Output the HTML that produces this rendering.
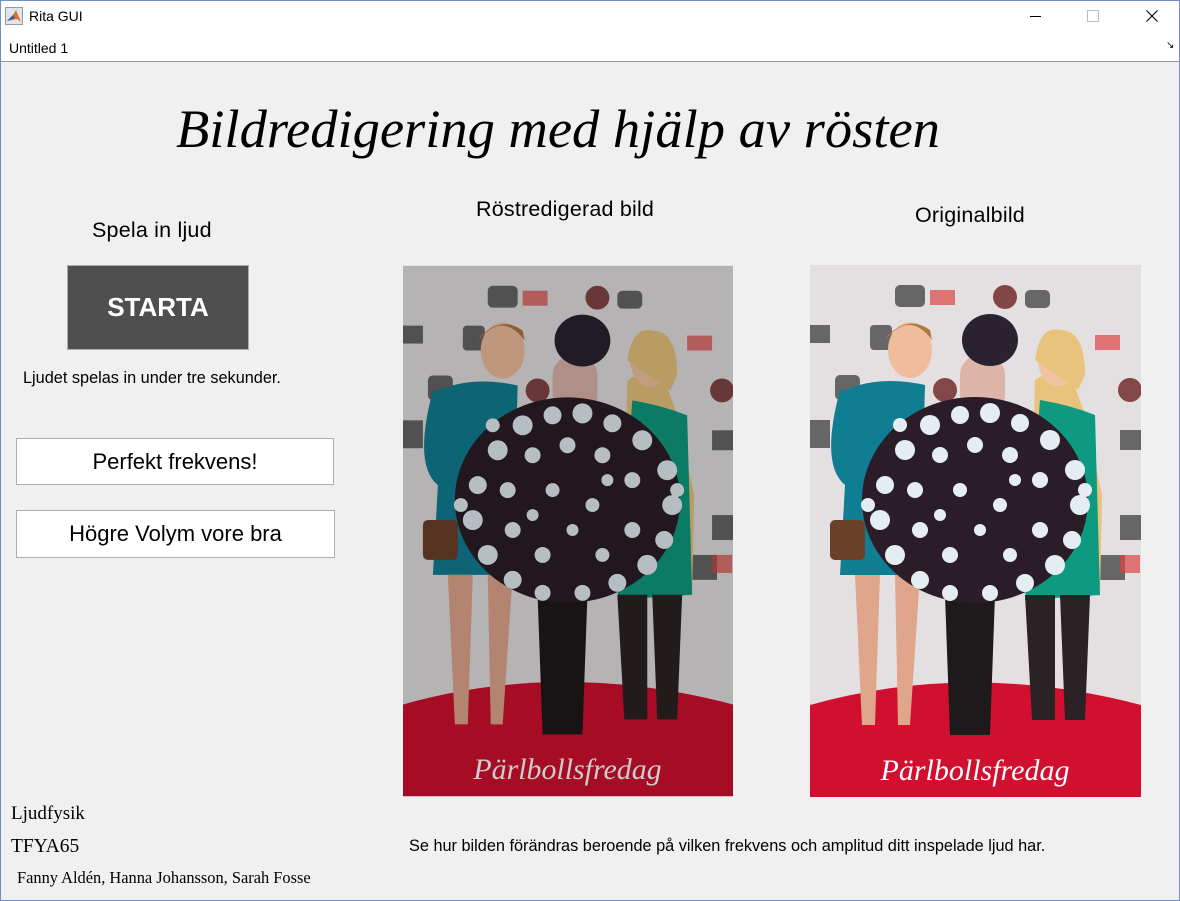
<!DOCTYPE html>
<html><head><meta charset="utf-8"><style>
body{margin:0;width:1180px;height:901px;background:#f0f0f0;position:relative;overflow:hidden;font-family:"Liberation Sans",sans-serif}
.a{position:absolute;white-space:nowrap}
.btn{position:absolute;background:#fff;border:1px solid #adadad;font-size:22px;text-align:center;box-sizing:border-box}
</style></head><body>
<div class="a" style="left:0;top:0;width:1180px;height:62px;background:#fff;border-bottom:1px solid #9a9a9a;box-sizing:border-box"></div>
<div class="a" style="left:0;top:0;width:1180px;height:901px;border:1px solid #6d8cc8;box-sizing:border-box;z-index:5;pointer-events:none"></div>
<svg class="a" style="left:5px;top:7px" width="18" height="18" viewBox="0 0 18 18"><rect x="0.5" y="0.5" width="17" height="17" fill="#dde6f0" stroke="#999"/><path d="M2 14 L8 8 L11 3 L16 15 L12 12 Z" fill="#e07020"/><path d="M2 14 L8 8 L10 11 Z" fill="#2a5fa8"/></svg>
<div class="a" style="left:29px;top:8px;font-size:14px;color:#000">Rita GUI</div>
<div class="a" style="left:1030px;top:16px;width:11px;height:1px;background:#000"></div>
<div class="a" style="left:1087px;top:10px;width:10px;height:10px;border:1px solid #bbb"></div>
<svg class="a" style="left:1146px;top:10px" width="12" height="12"><path d="M0.5 0.5L11.5 11.5M11.5 0.5L0.5 11.5" stroke="#000" stroke-width="1.1"/></svg>
<div class="a" style="left:9px;top:40px;font-size:14px">Untitled 1</div>
<div class="a" style="left:1166px;top:40px;font-size:10px">↘</div>

<div class="a" style="left:176px;top:97px;font-family:'Liberation Serif',serif;font-style:italic;font-size:54.5px;color:#000">Bildredigering med hjälp av rösten</div>
<div class="a" style="left:92px;top:218px;font-size:21.5px;letter-spacing:0.2px">Spela in ljud</div>
<div class="a" style="left:476px;top:197px;font-size:21.5px;letter-spacing:0.2px">Röstredigerad bild</div>
<div class="a" style="left:915px;top:203px;font-size:21.5px;letter-spacing:0.2px">Originalbild</div>
<div class="a" style="left:67px;top:265px;width:182px;height:85px;background:#4f4f4f;border:1px solid #adadad;box-sizing:border-box;color:#fff;font-weight:bold;font-size:26px;text-align:center;line-height:83px">STARTA</div>
<div class="a" style="left:23px;top:369px;font-size:16.3px">Ljudet spelas in under tre sekunder.</div>
<div class="btn" style="left:16px;top:438px;width:318px;height:47px;line-height:45px">Perfekt frekvens!</div>
<div class="btn" style="left:16px;top:510px;width:319px;height:48px;line-height:46px">Högre Volym vore bra</div>
<div class="a" style="left:11px;top:803px;font-family:'Liberation Serif',serif;font-size:19px">Ljudfysik</div>
<div class="a" style="left:11px;top:836px;font-family:'Liberation Serif',serif;font-size:19.5px">TFYA65</div>
<div class="a" style="left:17px;top:868px;font-family:'Liberation Serif',serif;font-size:16.4px">Fanny Aldén, Hanna Johansson, Sarah Fosse</div>
<div class="a" style="left:409px;top:837px;font-size:16.3px">Se hur bilden förändras beroende på vilken frekvens och amplitud ditt inspelade ljud har.</div>

<svg width="0" height="0" style="position:absolute"><defs>
<g id="ph">
<rect width="331" height="532" fill="#e4e0e1"/>
<g fill="#333" opacity=".7"><rect x="85" y="20" width="30" height="22" rx="5"/><rect x="215" y="25" width="25" height="18" rx="5"/><rect x="0" y="60" width="20" height="18"/><rect x="60" y="60" width="22" height="25" rx="4"/><rect x="25" y="110" width="25" height="25" rx="5"/><rect x="0" y="155" width="20" height="28"/><rect x="310" y="165" width="21" height="20"/><rect x="310" y="250" width="21" height="25"/><rect x="290" y="290" width="25" height="25"/></g>
<g fill="#d44" opacity=".7"><rect x="120" y="25" width="25" height="15"/><rect x="285" y="70" width="25" height="15"/><rect x="310" y="290" width="20" height="18"/></g>
<g fill="#6a2020" opacity=".8"><circle cx="195" cy="32" r="12"/><circle cx="135" cy="125" r="12"/><circle cx="320" cy="125" r="12"/></g>
<path d="M0 440 Q160 395 331 440 L331 532 L0 532Z" fill="#d0102e"/>
<rect x="150" y="90" width="45" height="60" rx="20" fill="#d9a99a" opacity=".8"/>
<path d="M35 125 Q70 110 115 120 L110 310 L30 310 L35 220 Q10 200 30 125Z" fill="#0f7d92"/>
<path d="M45 310 L70 310 L65 460 L52 460Z M85 310 L110 310 L100 460 L88 460Z" fill="#e0a68c"/>
<ellipse cx="100" cy="85" rx="22" ry="28" fill="#efbd9c"/><path d="M75 75 Q100 45 122 75 L120 65 Q100 50 78 70Z" fill="#b07840"/>
<rect x="20" y="255" width="35" height="40" rx="5" fill="#6a4028"/>
<path d="M225 115 Q255 95 268 130 L275 150 L292 230 L290 330 L220 330 Z" fill="#e8c37c"/>
<path d="M230 135 Q260 140 285 150 L290 330 L215 335Z" fill="#0e9a80"/>
<ellipse cx="248" cy="95" rx="20" ry="26" fill="#f2c3a2"/><path d="M225 95 Q230 60 250 65 Q275 65 275 110 L268 125 Z" fill="#e8c37c"/>
<path d="M215 330 L245 330 L245 455 L222 455Z M250 330 L280 330 L275 455 L255 455Z" fill="#2a2224"/>
<path d="M135 330 L185 330 L180 470 L140 470Z" fill="#1e1a1c"/>
<ellipse cx="180" cy="75" rx="28" ry="26" fill="#2a2230"/>
<ellipse cx="165" cy="235" rx="113" ry="103" fill="#2b1d27"/>
<g fill="#e4eef2">
<circle cx="120" cy="160" r="10"/><circle cx="150" cy="150" r="9"/><circle cx="180" cy="148" r="10"/><circle cx="210" cy="158" r="9"/><circle cx="240" cy="175" r="10"/><circle cx="95" cy="185" r="10"/><circle cx="265" cy="205" r="10"/><circle cx="75" cy="220" r="9"/><circle cx="270" cy="240" r="10"/><circle cx="70" cy="255" r="10"/><circle cx="262" cy="275" r="9"/><circle cx="85" cy="290" r="10"/><circle cx="245" cy="300" r="10"/><circle cx="110" cy="315" r="9"/><circle cx="215" cy="318" r="9"/><circle cx="140" cy="328" r="8"/><circle cx="180" cy="328" r="8"/><circle cx="130" cy="190" r="8"/><circle cx="165" cy="180" r="8"/><circle cx="200" cy="190" r="8"/><circle cx="230" cy="215" r="8"/><circle cx="105" cy="225" r="8"/><circle cx="110" cy="265" r="8"/><circle cx="230" cy="265" r="8"/><circle cx="140" cy="290" r="8"/><circle cx="200" cy="290" r="7"/><circle cx="150" cy="225" r="7"/><circle cx="190" cy="240" r="7"/><circle cx="170" cy="265" r="6"/><circle cx="130" cy="250" r="6"/><circle cx="205" cy="215" r="6"/><circle cx="90" cy="160" r="7"/><circle cx="58" cy="240" r="7"/><circle cx="275" cy="225" r="7"/>
</g>
<text x="165" y="515" text-anchor="middle" font-family="Liberation Serif,serif" font-style="italic" font-size="30" fill="#fff">Pärlbollsfredag</text>
</g></defs></svg>
<svg class="a" style="left:403px;top:265px" width="330" height="532" viewBox="0 0 331 532"><use href="#ph"/><rect width="331" height="532" fill="#000" opacity=".2"/></svg>
<svg class="a" style="left:810px;top:265px" width="331" height="532" viewBox="0 0 331 532"><use href="#ph"/></svg>
</body></html>
